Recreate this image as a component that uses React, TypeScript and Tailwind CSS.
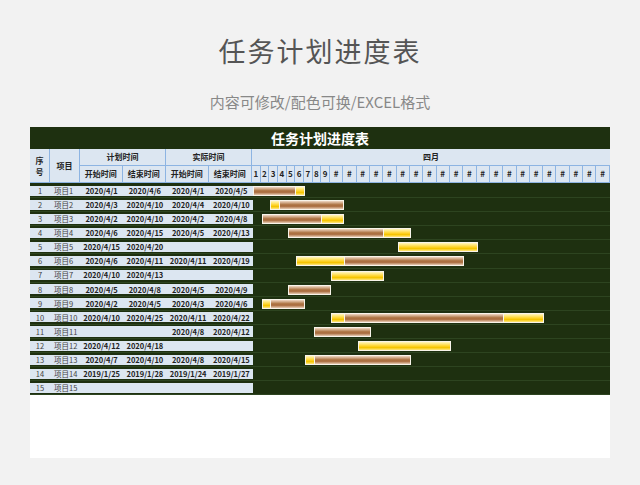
const rows: [string, string, string, string][] = [
  ["2020/4/1", "2020/4/6", "2020/4/1", "2020/4/5"],
  ["2020/4/3", "2020/4/10", "2020/4/4", "2020/4/10"],
  ["2020/4/2", "2020/4/10", "2020/4/2", "2020/4/8"],
  ["2020/4/6", "2020/4/15", "2020/4/5", "2020/4/13"],
  ["2020/4/15", "2020/4/20", "", ""],
  ["2020/4/6", "2020/4/11", "2020/4/11", "2020/4/19"],
  ["2020/4/10", "2020/4/13", "", ""],
  ["2020/4/5", "2020/4/8", "2020/4/5", "2020/4/9"],
  ["2020/4/2", "2020/4/5", "2020/4/3", "2020/4/6"],
  ["2020/4/10", "2020/4/25", "2020/4/11", "2020/4/22"],
  ["", "", "2020/4/8", "2020/4/12"],
  ["2020/4/12", "2020/4/18", "", ""],
  ["2020/4/7", "2020/4/10", "2020/4/8", "2020/4/15"],
  ["2019/1/25", "2019/1/28", "2019/1/24", "2019/1/27"],
  ["", "", "", ""],
];
const dayX = (d: number) => (d <= 10 ? (d - 1) * 8.67 : 78 + (d - 10) * 13.33);
const parse = (s: string) => (s.startsWith("2020/4/") ? parseInt(s.split("/")[2]) : null);
const days = Array.from({ length: 30 }, (_, i) => i + 1);

function Bar({ a, b, kind }: { a: string; b: string; kind: "y" | "b" }) {
  const s = parse(a), e = parse(b);
  if (s == null || e == null) return null;
  const left = dayX(s), right = dayX(e + 1);
  const bg = kind === "y"
    ? "linear-gradient(#fff6c0,#ffd83a 45%,#f5c400 70%,#ffe880)"
    : "linear-gradient(#f0d8c4,#b07848 45%,#a86a3c 65%,#e8cdb5)";
  return (
    <div className="absolute top-[2px] h-[10px] border border-[#f8f4ea]" style={{ left, width: right - left, background: bg }} />
  );
}

export default function App() {
  const cell = "border-r border-[#8db4e2] flex items-center justify-center";
  return (
    <div className="w-[640px] h-[485px] bg-[#f2f2f2] flex flex-col items-center" style={{ fontFamily: '"Noto Sans CJK SC", "Noto Sans", sans-serif' }}>
      <div className="mt-[33px] text-[27px] leading-[36px] text-[#555] tracking-[2px]">任务计划进度表</div>
      <div className="mt-[23px] text-[15px] leading-[20px] text-[#888]">内容可修改/配色可换/EXCEL格式</div>
      <div className="mt-[15px] w-[580px] h-[331px] bg-white flex flex-col">
        <div className="h-[22px] bg-[#1e3010] text-white text-[14px] font-bold flex items-center justify-center">任务计划进度表</div>
        <div className="flex h-[34px] bg-[#dce6f1] text-[8px] font-bold text-[#222] border-b border-[#8db4e2]">
          <div className={`${cell} w-[20px] flex-col leading-[11px]`}><span>序</span><span>号</span></div>
          <div className={`${cell} w-[30px]`}>项目</div>
          {["计划时间", "实际时间"].map((t) => (
            <div key={t} className="w-[86px] flex flex-col border-r border-[#8db4e2]">
              <div className="h-[17px] flex items-center justify-center border-b border-[#8db4e2]">{t}</div>
              <div className="flex-1 flex">
                <div className="w-[43px] flex items-center justify-center border-r border-[#8db4e2]">开始时间</div>
                <div className="w-[43px] flex items-center justify-center">结束时间</div>
              </div>
            </div>
          ))}
          <div className="flex-1 flex flex-col">
            <div className="h-[17px] flex items-center justify-center border-b border-[#8db4e2]">四月</div>
            <div className="flex-1 flex">
              {days.map((d) => (
                <div key={d} className={`${d < 10 ? "w-[8.67px]" : "w-[13.33px]"} border-r border-[#8db4e2] flex items-center justify-center text-[8px]`}>{d < 10 ? d : "#"}</div>
              ))}
            </div>
          </div>
        </div>
        <div className="bg-[#1e3010] pt-[1px]">
          {rows.map((r, i) => (
            <div key={i} className="flex h-[14.1px] border-b border-[#2d4420]">
              <div className="w-[223px] my-[1.5px] bg-[#dce6f1] flex items-center text-[7.5px] text-[#222]">
                <div className="w-[20px] text-center text-[#444] font-normal">{i + 1}</div>
                <div className="w-[30px] pl-[4px] text-[#444]">项目{i + 1}</div>
                {r.map((v, j) => (
                  <div key={j} className="w-[43.25px] text-center font-bold">{v}</div>
                ))}
              </div>
              <div className="flex-1 relative">
                <Bar a={r[0]} b={r[1]} kind="y" />
                <Bar a={r[2]} b={r[3]} kind="b" />
              </div>
            </div>
          ))}
        </div>
      </div>
    </div>
  );
}
